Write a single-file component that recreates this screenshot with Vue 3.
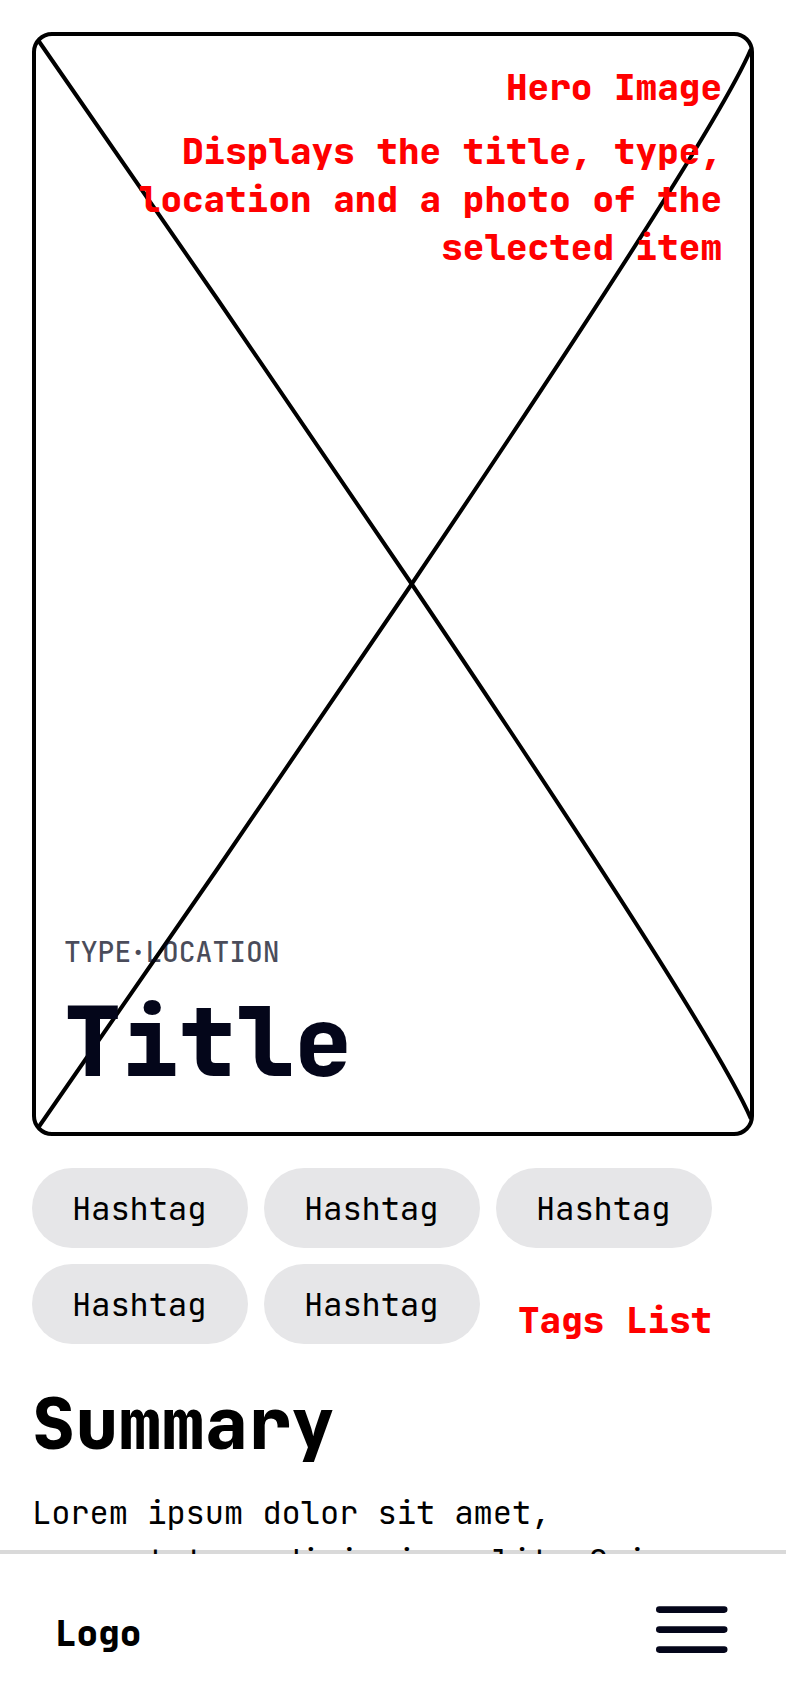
<script setup>
const tags = ['Hashtag', 'Hashtag', 'Hashtag', 'Hashtag', 'Hashtag']
</script>

<template>
  <div class="page">
    <main class="content">
      <section class="hero">
        <svg class="placeholder" viewBox="0 0 722 1104" preserveAspectRatio="none" aria-hidden="true">
          <path d="M6 8 L186 268 L379.700 552 C582 852 693 1026 719 1087" />
          <path d="M6 1096 L186 836 L379.700 552 C582 252 693 78 719 17" />
        </svg>
        <div class="notes">
          <p class="note">Hero Image</p>
          <p class="note">Displays the title, type, location and a photo of the selected item</p>
        </div>
        <div class="caption">
          <p class="meta"><span>TYPE</span><span class="dot">·</span><span>LOCATION</span></p>
          <h1 class="title">Title</h1>
        </div>
      </section>

      <div class="tags">
        <span v-for="(tag, i) in tags" :key="i" class="tag">{{ tag }}</span>
        <p class="note tags-note">Tags List</p>
      </div>

      <section class="summary">
        <h2 class="heading">Summary</h2>
        <p class="body">Lorem ipsum dolor sit amet, consectetur adipiscing elit. Quis</p>
      </section>
    </main>

    <footer class="bar">
      <span class="logo">Logo</span>
      <button class="menu" type="button" aria-label="Menu">
        <svg viewBox="0 0 72 48" aria-hidden="true">
          <path d="M3.300 4.600H68.200M3.300 24.600H68.200M3.300 44.600H68.200" />
        </svg>
      </button>
    </footer>
  </div>
</template>

<style>
body {
  background: #fff;
}
</style>

<style scoped>
.page {
  min-height: 100vh;
  color: #000;
  font-family: "JetBrains Mono", "DejaVu Sans Mono", monospace;
}

p,
h1,
h2 {
  margin: 0;
}

.content {
  display: flex;
  flex-direction: column;
  gap: 32px;
  padding: 32px;
}

.hero {
  position: relative;
  display: flex;
  flex-direction: column;
  justify-content: space-between;
  box-sizing: border-box;
  aspect-ratio: 722 / 1104;
  padding: 27px 28px 30px;
  border: 4px solid #000;
  border-radius: 20px;
}

.placeholder {
  position: absolute;
  top: -4px;
  left: -4px;
  width: calc(100% + 8px);
  height: calc(100% + 8px);
  fill: none;
  stroke: #000;
  stroke-width: 4;
}

.notes,
.caption {
  position: relative;
  display: flex;
  flex-direction: column;
}

.notes {
  gap: 16px;
  text-align: right;
}

.caption {
  gap: 12px;
}

.note {
  color: #f00;
  font-size: 36px;
  font-weight: 800;
  line-height: 48px;
}

.meta {
  display: flex;
  color: rgba(4, 6, 26, 0.72);
  font-size: 28px;
  font-weight: 500;
  line-height: 36px;
}

.dot {
  display: flex;
  justify-content: center;
  width: 14px;
  font-weight: 700;
}

.title {
  color: #04061a;
  font-size: 96px;
  font-weight: 800;
  line-height: 120px;
}

.tags {
  display: flex;
  flex-wrap: wrap;
  gap: 16px;
}

.tag {
  display: flex;
  align-items: center;
  box-sizing: border-box;
  min-width: 216px;
  height: 80px;
  padding: 0 40px;
  border-radius: 40px;
  background: #e6e6e8;
  font-size: 32px;
}

.tags-note {
  align-self: flex-end;
  padding-left: 22px;
}

.summary {
  display: flex;
  flex-direction: column;
  gap: 17px;
}

.heading {
  font-size: 72px;
  font-weight: 800;
  line-height: 96px;
}

.body {
  font-size: 32px;
  line-height: 48px;
}

.bar {
  position: fixed;
  right: 0;
  bottom: 0;
  left: 0;
  display: flex;
  align-items: center;
  justify-content: space-between;
  box-sizing: border-box;
  height: 154px;
  padding: 0 58px 0 55px;
  border-top: 4px solid rgba(0, 0, 0, 0.15);
  background: #fff;
  background-clip: padding-box;
}

.logo {
  padding-top: 8px;
  font-size: 36px;
  font-weight: 800;
  line-height: 48px;
}

.menu {
  padding: 0;
  border: 0;
  background: none;
  cursor: pointer;
}

.menu svg {
  display: block;
  width: 72px;
  height: 48px;
  fill: none;
  stroke: #04061a;
  stroke-width: 6.6;
  stroke-linecap: round;
}
</style>
